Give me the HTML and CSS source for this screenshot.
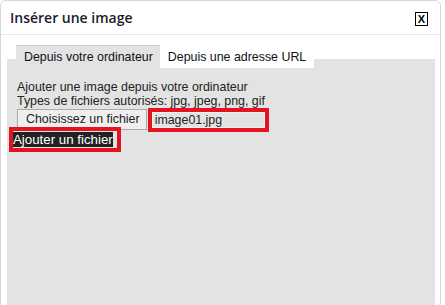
FILE: index.html
```html
<!DOCTYPE html>
<html lang="fr">
<head>
  <meta charset="UTF-8">
  <title>Insérer une image</title>
  <link rel="stylesheet" href="styles.css">
</head>
<body>
  <div id="dialog">
    <div class="dialog-head">
      <h2>Insérer une image</h2>
      <span class="close">X</span>
    </div>
    <div class="dialog-body">
      <div class="tabs">
        <span class="tab active">Depuis votre ordinateur</span>
        <span class="tab">Depuis une adresse URL</span>
      </div>
      <div class="panel">
        <p>Ajouter une image depuis votre ordinateur<br>Types de fichiers autorisés: jpg, jpeg, png, gif</p>
        <div class="file-row">
          <span class="file-btn">Choisissez un fichier</span>
          <span class="file-name">image01.jpg</span>
        </div>
        <div class="add-file"><span>Ajouter un fichier</span></div>
      </div>
    </div>
  </div>
</body>
</html>
```

FILE: styles.css
```css
body { margin: 0; background: #fff; font-family: Arial, "Liberation Sans", sans-serif; }
#dialog { width: 441px; height: 308px; border: 1px solid #d6d6d6; border-radius: 6px; background: #fff; box-sizing: border-box; overflow: hidden; }
.dialog-head { display: flex; justify-content: space-between; align-items: center; height: 33px; padding: 0 12px 0 9px; border-bottom: 1px solid #e6e6e6; }
.dialog-head h2 { margin: 0; font-size: 14px; font-weight: 600; color: #1c1b2b; font-family: "Open Sans", Arial, sans-serif; }
.close { border: 1px solid #000; font-size: 11px; font-weight: bold; line-height: 12px; padding: 0 2px; color: #000; margin-top: 3px; }
.dialog-body { padding: 10px 5px 0 6px; }
.tabs { display: flex; padding-left: 9px; font-size: 12.4px; position: relative; z-index: 1; }
.tab { padding: 5px 8px 4px 8px; background: #fff; color: #111; }
.tab.active { background: #e3e3e3; border-top: 1px solid #cfcfcf; padding-top: 4px; padding-right: 7px; }
.panel { background: #e3e3e3; height: 243px; margin-top: -9px; padding: 21px 10px 0; font-size: 12.4px; color: #222; }
.panel p { margin: 0; line-height: 14px; }
.file-row { display: flex; align-items: flex-start; }
.file-btn { border: 1px solid #aaa; background: #efefef; padding: 2px 6px 2px 8px; line-height: 15px; margin-top: 1px; }
.file-name { border: 4px solid #e3141f; padding: 1px 12px 0 3px; width: 98px; height: 15px; line-height: 14px; background: #e3e3e3; box-shadow: inset 0 0 0 1px #f2f2f2; margin-left: 1px; }
.add-file { display: inline-block; margin: -5px 0 0 -8px; border: 4px solid #e3141f; padding: 1px 4px 1px 0; font-size: 13.3px; }
.add-file span { display: inline-block; background: #222; color: #fff; line-height: 15px; }
```
